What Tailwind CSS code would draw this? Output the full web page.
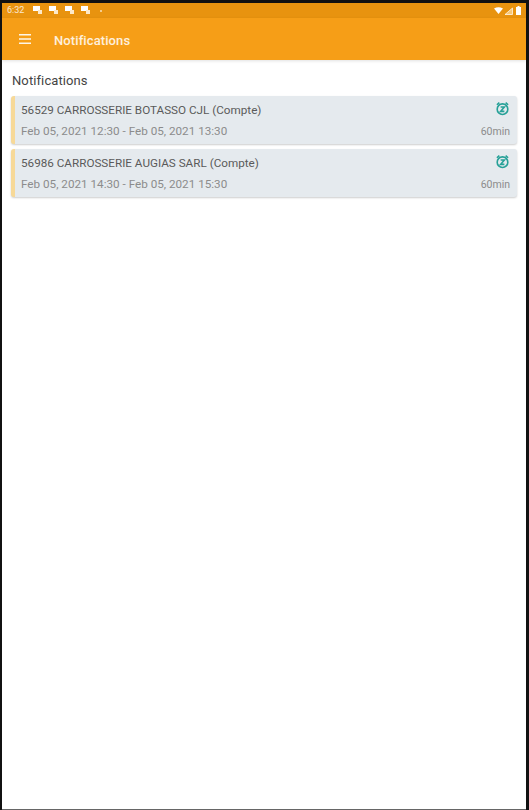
<!DOCTYPE html>
<html lang="en">
  <head>
    <meta charset="UTF-8" />
    <title>Notifications</title>
    <script src="https://cdn.jsdelivr.net/npm/@tailwindcss/browser@4"></script>
  </head>
  <body class="bg-[#111] h-[810px] w-[529px] overflow-hidden font-['Roboto',sans-serif]">
    <div class="ml-[2px] mr-[3px] pt-[3px] h-[810px] flex flex-col">
      <div class="flex-1 flex flex-col bg-white border-b border-[#666] overflow-hidden">
        <!-- status bar -->
        <div class="h-[15px] bg-[#e8930f] flex items-center pl-[5px] pr-[5px] text-white shrink-0">
          <span class="text-[9px] leading-none w-[26px] opacity-80">6:32</span>
          <div class="flex gap-[6px] items-center">
            <svg class="w-[10px] h-[9px]" viewBox="0 0 10 9"><path d="M0 0h7v5H0z" fill="#fff"/><path d="M5 4h4v4H5z" fill="#fde9c8"/></svg>
            <svg class="w-[10px] h-[9px]" viewBox="0 0 10 9"><path d="M0 0h7v5H0z" fill="#fff"/><path d="M5 4h4v4H5z" fill="#fde9c8"/></svg>
            <svg class="w-[10px] h-[9px]" viewBox="0 0 10 9"><path d="M0 0h7v5H0z" fill="#fff"/><path d="M5 4h4v4H5z" fill="#fde9c8"/></svg>
            <svg class="w-[10px] h-[9px]" viewBox="0 0 10 9"><path d="M0 0h7v5H0z" fill="#fff"/><path d="M5 4h4v4H5z" fill="#fde9c8"/></svg>
            <div class="w-[2px] h-[2px] ml-[3px] rounded-full bg-white/70"></div>
          </div>
          <div class="ml-auto flex items-center gap-[1px]">
            <svg class="w-[9px] h-[7px]" viewBox="0 0 9 7"><path d="M0 1.500Q4.500-1 9 1.500L4.500 7z" fill="#fff"/></svg>
            <svg class="w-[9px] h-[8px]" viewBox="0 0 9 8"><path d="M8.500 1v6.500H1z" fill="#f8c878" stroke="#fff" stroke-opacity=".7"/></svg>
            <svg class="w-[5px] h-[9px] ml-[2px]" viewBox="0 0 5 9"><path d="M1.500 0h2v1H5v8H0V1h1.500z" fill="#fff"/></svg>
          </div>
        </div>
        <!-- app bar -->
        <div class="h-[42px] bg-[#f69e17] flex items-center pl-[17px] shrink-0 shadow-[0_1px_3px_rgba(0,0,0,0.12)]">
          <svg class="w-[12px] h-[10px] mb-[1px]" viewBox="0 0 12 10"><path d="M0 0h12v1.500H0zM0 4.200h12v1.500H0zM0 8.500h12V10H0z" fill="#fff" fill-opacity=".9"/></svg>
          <span class="ml-[23px] mt-[3px] text-[13px] font-medium text-white/85 tracking-[0.1px]">Notifications</span>
        </div>
        <!-- content -->
        <div class="px-[9px] pt-[12px]">
          <h1 class="pl-[1px] text-[13px] leading-[17px] text-[#444] tracking-[0.1px]">Notifications</h1>
          <div class="mt-[7px] flex flex-col gap-[5px]">
            <div class="h-[48px] bg-[#e5eaee] border-l-[4px] border-[#f7d998] rounded-[3px] shadow-[0_1px_2px_rgba(0,0,0,0.2)] pl-[6px] pr-[7px] pt-[6px]">
              <div class="flex justify-between h-[21px]">
                <span class="text-[11.7px] leading-[16px] text-[#5a5a5a]">56529 CARROSSERIE BOTASSO CJL (Compte)</span>
                <svg class="w-[15px] h-[15px] -mt-[1px]" viewBox="0 0 24 24" fill="none" stroke="#27a198" stroke-width="2.600"><circle cx="12" cy="13" r="8.500"/><path d="M3 6l4-3.500M21 6l-4-3.500M9 9.500h6l-6 7h6"/></svg>
              </div>
              <div class="flex justify-between items-baseline">
                <span class="text-[11.7px] leading-[16px] text-[#8c8c8c]">Feb 05, 2021 12:30 - Feb 05, 2021 13:30</span>
                <span class="text-[10.5px] text-[#8c8c8c]">60min</span>
              </div>
            </div>
            <div class="h-[48px] bg-[#e5eaee] border-l-[4px] border-[#f7d998] rounded-[3px] shadow-[0_1px_2px_rgba(0,0,0,0.2)] pl-[6px] pr-[7px] pt-[6px]">
              <div class="flex justify-between h-[21px]">
                <span class="text-[11.7px] leading-[16px] text-[#5a5a5a]">56986 CARROSSERIE AUGIAS SARL (Compte)</span>
                <svg class="w-[15px] h-[15px] -mt-[1px]" viewBox="0 0 24 24" fill="none" stroke="#27a198" stroke-width="2.600"><circle cx="12" cy="13" r="8.500"/><path d="M3 6l4-3.500M21 6l-4-3.500M9 9.500h6l-6 7h6"/></svg>
              </div>
              <div class="flex justify-between items-baseline">
                <span class="text-[11.7px] leading-[16px] text-[#8c8c8c]">Feb 05, 2021 14:30 - Feb 05, 2021 15:30</span>
                <span class="text-[10.5px] text-[#8c8c8c]">60min</span>
              </div>
            </div>
          </div>
        </div>
      </div>
    </div>
  </body>
</html>
